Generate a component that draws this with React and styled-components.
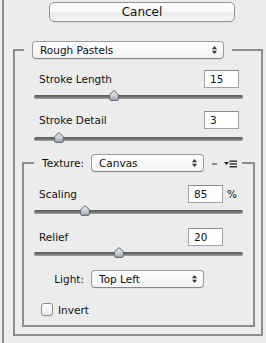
import React from 'react';
import styled, { createGlobalStyle } from 'styled-components';

const GlobalStyle = createGlobalStyle`
  html, body {
    margin: 0;
    padding: 0;
    background: #ececec;
  }
  body {
    font-family: "DejaVu Sans", "Liberation Sans", sans-serif;
    font-size: 10.5px;
    color: #111;
  }
`;

const LINE = '#8d8d8d';

function Arrows() {
  return (
    <ArrowIcon width="5" height="8" viewBox="0 0 5 8">
      <path d="M0 3.2 L2.5 0 L5 3.2 Z M0 4.8 L5 4.8 L2.5 8 Z" fill="#333" />
    </ArrowIcon>
  );
}

function Dropdown({ value, width }) {
  return (
    <Select $width={width}>
      <span>{value}</span>
      <Arrows />
    </Select>
  );
}

function Thumb({ left }) {
  return (
    <ThumbIcon width="10" height="11" viewBox="0 0 10 11" style={{ left }}>
      <defs>
        <linearGradient id="thumbFill" x1="0" y1="0" x2="0" y2="1">
          <stop offset="0" stopColor="#eef1f5" />
          <stop offset="0.55" stopColor="#c9ced6" />
          <stop offset="1" stopColor="#9aa2ad" />
        </linearGradient>
      </defs>
      <path
        d="M5 0.6 L9.4 4.6 V8.8 Q9.4 10.4 7.8 10.4 H2.2 Q0.6 10.4 0.6 8.8 V4.6 Z"
        fill="url(#thumbFill)"
        stroke="#5f6368"
        strokeWidth="1"
      />
    </ThumbIcon>
  );
}

function Slider({ value, min, max, top }) {
  const pos = 5 + ((value - min) / (max - min)) * 199;
  return (
    <SliderTrack $top={top}>
      <Groove />
      <Thumb left={pos - 5} />
    </SliderTrack>
  );
}

function Param({ label, value, top, unit }) {
  return (
    <Row $top={top}>
      <Label>{label}</Label>
      <Field>
        <NumberBox>{value}</NumberBox>
        {unit !== undefined && <Unit>{unit}</Unit>}
      </Field>
    </Row>
  );
}

function PanelMenu() {
  return (
    <MenuIcon width="13" height="8" viewBox="0 0 13 8">
      <path d="M0 2 L5 2 L2.5 5 Z" fill="#222" />
      <rect x="5.5" y="0.5" width="7.5" height="1.3" fill="#222" />
      <rect x="5.5" y="3.3" width="7.5" height="1.3" fill="#222" />
      <rect x="5.5" y="6.1" width="7.5" height="1.3" fill="#222" />
    </MenuIcon>
  );
}

export default function App() {
  return (
    <Window>
      <GlobalStyle />
      <Panel>
        <CancelButton>Cancel</CancelButton>
        <Group>
          <Legend $inset={9} $pad="0 8px">
            <LegendRow>
              <Dropdown value="Rough Pastels" width={192} />
            </LegendRow>
          </Legend>
          <GroupBody $pad="0 6px 7px 7px">
            <Controls>
              <Param label="Stroke Length" value="15" top={11} />
              <Slider value={15} min={0} max={40} top={2} />
              <Param label="Stroke Detail" value="3" top={9} />
              <Slider value={3} min={1} max={21} top={3} />
            </Controls>
            <Group $top={10}>
              <Legend $inset={10} $pad="0 5px 0 4px">
                <LegendRow>
                  <Caption>Texture:</Caption>
                  <Dropdown value="Canvas" width={113} />
                  <LegendRule />
                  <PanelMenu />
                </LegendRow>
              </Legend>
              <GroupBody $pad="0 10px 9px">
                <Param label="Scaling" value="85" unit="%" top={13} />
                <Slider value={85} min={50} max={200} top={2} />
                <Param label="Relief" value="20" unit="" top={11} />
                <Slider value={20} min={0} max={50} top={1} />
                <LightRow>
                  <Caption>Light:</Caption>
                  <Dropdown value="Top Left" width={113} />
                </LightRow>
                <CheckRow>
                  <CheckBox />
                  <span>Invert</span>
                </CheckRow>
              </GroupBody>
            </Group>
          </GroupBody>
        </Group>
      </Panel>
    </Window>
  );
}

const Window = styled.div`
  width: 266px;
  height: 343px;
  box-sizing: border-box;
  padding-left: 2px;
  background: #ececec;
  overflow: hidden;
`;

const Panel = styled.div`
  height: 100%;
  box-sizing: border-box;
  border-left: 2px solid ${LINE};
  padding-top: 2px;
`;

const CancelButton = styled.button`
  display: block;
  margin-left: 45px;
  width: 186px;
  height: 20px;
  padding: 0;
  border: 1px solid #939393;
  border-radius: 5px;
  background: linear-gradient(#ffffff 0%, #f7f7f7 50%, #ececec 51%, #f4f4f4 100%);
  box-shadow: 0 1px 0 rgba(0, 0, 0, 0.06);
  font-family: "DejaVu Sans", "Liberation Sans", sans-serif;
  font-size: 12px;
  color: #111;
`;

const Group = styled.fieldset`
  margin: ${(p) => p.$top ?? 19}px 0 0 ${(p) => (p.$top ? 0 : 9)}px;
  padding: 0;
  min-width: 0;
  width: ${(p) => (p.$top ? 'auto' : '250px')};
  box-sizing: border-box;
  border: 2px solid ${LINE};
`;

const Legend = styled.legend`
  margin-left: ${(p) => p.$inset}px;
  padding: ${(p) => p.$pad};
`;

const LegendRow = styled.div`
  display: flex;
  align-items: center;
`;

const GroupBody = styled.div`
  padding: ${(p) => p.$pad};
  display: flex;
  flex-direction: column;
`;

const Controls = styled.div`
  padding: 0 12px;
  display: flex;
  flex-direction: column;
`;

const Select = styled.div`
  width: ${(p) => p.$width}px;
  height: 18px;
  box-sizing: border-box;
  display: flex;
  align-items: center;
  justify-content: space-between;
  padding: 0 6px 0 7px;
  border: 1px solid #9b9b9b;
  border-bottom-color: #858585;
  border-radius: 4px;
  background: linear-gradient(#ffffff, #f2f2f2);
  box-shadow: 0 1px 0 rgba(0, 0, 0, 0.05);
  font-size: 10.5px;
  color: #111;
`;

const ArrowIcon = styled.svg`
  display: block;
  flex: none;
`;

const Caption = styled.span`
  width: 46px;
  margin-right: 7px;
  text-align: right;
  white-space: nowrap;
`;

const LegendRule = styled.span`
  width: 5px;
  height: 2px;
  margin: 1px 7px 0 8px;
  background: ${LINE};
`;

const MenuIcon = styled.svg`
  display: block;
  margin-top: 2px;
`;

const Row = styled.div`
  margin-top: ${(p) => p.$top}px;
  height: 18px;
  padding: 0 4px 0 5px;
  display: flex;
  align-items: center;
  justify-content: space-between;
`;

const Label = styled.span`
  white-space: nowrap;
`;

const Field = styled.div`
  display: flex;
  align-items: center;
`;

const NumberBox = styled.div`
  width: 35px;
  height: 18px;
  box-sizing: border-box;
  padding-left: 5px;
  display: flex;
  align-items: center;
  background: #fff;
  border: 1px solid #a3a3a3;
  border-top-color: #8c8c8c;
`;

const Unit = styled.span`
  width: 12px;
  margin-left: 4px;
`;

const SliderTrack = styled.div`
  position: relative;
  margin-top: ${(p) => p.$top}px;
  height: 12px;
`;

const Groove = styled.div`
  position: absolute;
  left: 0;
  right: 0;
  top: 5px;
  height: 4px;
  border-radius: 2px;
  background: linear-gradient(#555555, #7a7a7a 60%, #a8a8a8);
`;

const ThumbIcon = styled.svg`
  position: absolute;
  top: 0;
  display: block;
`;

const LightRow = styled.div`
  margin-top: 11px;
  padding-left: 4px;
  display: flex;
  align-items: center;
`;

const CheckRow = styled.div`
  margin-top: 15px;
  padding-left: 7px;
  height: 13px;
  display: flex;
  align-items: center;
  gap: 5px;
`;

const CheckBox = styled.span`
  width: 12px;
  height: 13px;
  box-sizing: border-box;
  border: 1px solid #8e8e8e;
  border-radius: 3px;
  background: linear-gradient(#ffffff, #ececec);
  box-shadow: 0 1px 0 rgba(0, 0, 0, 0.05);
`;
